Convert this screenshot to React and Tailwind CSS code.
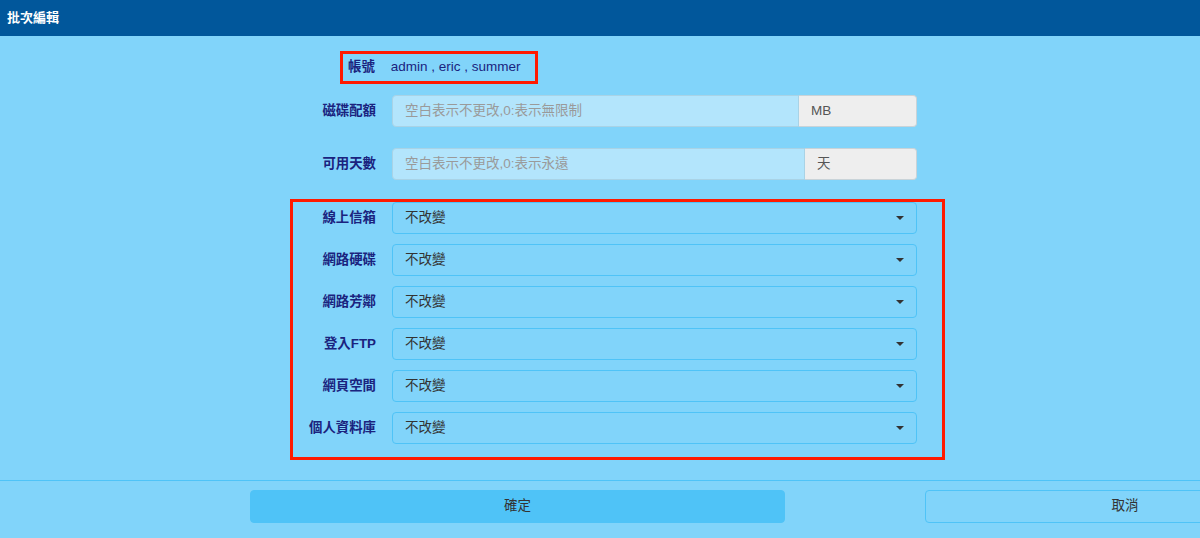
import React from 'react';

const FONT = { fontFamily: '"Liberation Sans", "Noto Sans CJK TC", sans-serif' };

const services = ['線上信箱', '網路硬碟', '網路芳鄰', '登入FTP', '網頁空間', '個人資料庫'];

function AddonInput({ placeholder, unit, inputClass }) {
  return (
    <div className="flex h-[32px] w-[525px]">
      <div
        className={`${inputClass} flex items-center rounded-l-[4px] border border-[#a9d3e6] bg-[#b3e5fc] px-3 text-[13.5px] text-[#9a9a9a]`}
      >
        {placeholder}
      </div>
      <div className="flex flex-1 items-center rounded-r-[4px] border border-l-0 border-[#c9d3d8] bg-[#eeeeee] px-3 text-[13.5px] text-[#555]">
        {unit}
      </div>
    </div>
  );
}

function SelectRow({ label }) {
  return (
    <div className="flex items-center">
      <div className="w-[83px] text-right text-[13.4px] font-bold text-[#1a237e]">{label}</div>
      <div className="ml-4 flex h-[32px] w-[525px] items-center justify-between rounded-[4px] border border-[#4fc3f7] bg-[#81d4fa] px-3 text-[13.5px] text-[#333]">
        <span>不改變</span>
        <span className="h-0 w-0 border-x-[4px] border-t-[4px] border-x-transparent border-t-[#333]"></span>
      </div>
    </div>
  );
}

export default function App() {
  return (
    <div className="h-[538px] w-[1200px] overflow-hidden bg-[#81d4fa]" style={FONT}>
      {/* Title bar */}
      <div className="flex h-[36px] items-center bg-[#01579b] px-[7px] text-[13px] font-bold text-white">
        批次編輯
      </div>

      {/* Form */}
      <div className="ml-[290px] w-[655px] pt-[15px]">
        <div className="flex">
          <div className="ml-[50px] flex h-[33px] items-center gap-4 border-[3px] border-[#ff1a00] pl-[5px] pr-[14px]">
            <span className="text-[13.4px] font-bold text-[#1a237e]">帳號</span>
            <span className="text-[13.5px] text-[#1a237e]">admin , eric , summer</span>
          </div>
        </div>

        <div className="mt-[11px] flex items-center">
          <div className="w-[86px] text-right text-[13.4px] font-bold text-[#1a237e]">磁碟配額</div>
          <div className="ml-4">
            <AddonInput placeholder="空白表示不更改,0:表示無限制" unit="MB" inputClass="w-[407px]" />
          </div>
        </div>

        <div className="mt-[21px] flex items-center">
          <div className="w-[86px] text-right text-[13.4px] font-bold text-[#1a237e]">可用天數</div>
          <div className="ml-4">
            <AddonInput placeholder="空白表示不更改,0:表示永遠" unit="天" inputClass="w-[413px]" />
          </div>
        </div>

        <div className="mt-[19px] flex flex-col gap-[10px] border-[3px] border-[#ff1a00] pb-[13px]">
          {services.map((s) => (
            <SelectRow key={s} label={s} />
          ))}
        </div>
      </div>

      {/* Footer */}
      <div className="mt-[20px] flex gap-[140px] border-t border-[#4fc3f7] pl-[250px] pt-[9px]">
        <button className="h-[33px] w-[535px] shrink-0 rounded-[4px] border border-[#4fc3f7] bg-[#4fc3f7] text-[13.5px] text-[#333]">
          確定
        </button>
        <button className="h-[33px] w-[400px] shrink-0 rounded-[4px] border border-[#4fc3f7] bg-[#81d4fa] text-[13.5px] text-[#333]">
          取消
        </button>
      </div>
    </div>
  );
}
